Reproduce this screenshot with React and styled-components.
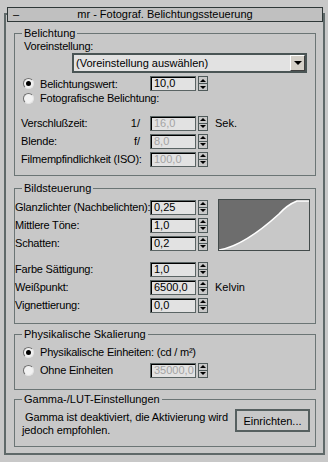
import React from 'react';
import styled, {createGlobalStyle} from 'styled-components';

const GlobalStyle = createGlobalStyle`
  html, body {
    margin: 0;
    padding: 0;
    background: #c8c8c8;
  }
  body {
    font-family: "Liberation Sans", Arial, sans-serif;
    font-size: 11px;
    color: #000;
  }
`

const Frame = styled.div`
  margin: 13px 3px 0 4px;
  border: 2px solid #5f6969;
  padding: 0 0 6px 0;
`

const TitleBar = styled.div`
  box-sizing: border-box;
  height: 15px;
  margin: -8px 0 0 1px;
  border: 1px solid #2f3838;
  background: #c0c0c0;
  display: flex;
  align-items: center;
  line-height: 13px;
`

const Collapse = styled.span`
  width: 14px;
  padding-left: 5px;
`

const TitleText = styled.span`
  flex: 1;
  text-align: center;
  margin-right: 19px;
`

const Group = styled.div`
  margin: ${({$top}) => $top}px 7px 0 8px;
  border: 1px solid #6b7575;
  padding-bottom: ${({$bottom}) => $bottom}px;
`

const GroupTitle = styled.div`
  display: table;
  margin: -8px 0 0 7px;
  padding: 0 2px;
  line-height: 14px;
  background: #c8c8c8;
`

const Caption = styled.div`
  height: 13px;
  line-height: 13px;
  padding-left: 9px;
  letter-spacing: -0.2px;
`

const Select = styled.div`
  box-sizing: border-box;
  height: 20px;
  margin: 0 8px 0 57px;
  border: 2px solid #4a5555;
  background: #e2e2e2;
  display: flex;
  align-items: center;
  padding-left: 2px;
`

const SelectText = styled.span`
  flex: 1;
`

const SelectArrow = styled.span`
  box-sizing: border-box;
  width: 15px;
  height: 16px;
  background: #d4d0c8;
  border: 1px solid;
  border-color: #ffffff #404040 #404040 #ffffff;
  display: flex;
  align-items: center;
  justify-content: center;
  &::after {
    content: '';
    border-left: 4px solid transparent;
    border-right: 4px solid transparent;
    border-top: 4px solid #000;
  }
`

const Row = styled.div`
  display: flex;
  align-items: center;
  height: ${({$h}) => $h || 18}px;
  margin-top: ${({$mt}) => $mt || 0}px;
  padding-left: ${({$pl}) => $pl || 0}px;
  white-space: nowrap;
`

const Label = styled.span`
  width: ${({$w}) => $w}px;
  flex: none;
  letter-spacing: -0.2px;
`

const Prefix = styled.span`
  width: 12px;
  margin-right: 10px;
  text-align: right;
  flex: none;
`

const Radio = styled.span`
  box-sizing: border-box;
  width: 11px;
  height: 11px;
  flex: none;
  margin-left: 8px;
  margin-right: 6px;
  border-radius: 50%;
  border: 1px solid #6e6e6e;
  border-right-color: #e4e4e4;
  border-bottom-color: #e4e4e4;
  background: #f2f2f2;
  display: flex;
  align-items: center;
  justify-content: center;
  &::after {
    content: '';
    width: 5px;
    height: 5px;
    border-radius: 50%;
    background: ${({$checked}) => $checked ? '#000' : 'transparent'};
  }
`

const RadioLabel = styled.span`
  width: ${({$w}) => $w ? `${$w}px` : 'auto'};
  flex: none;
  letter-spacing: -0.2px;
`

const Field = styled.span`
  box-sizing: border-box;
  width: 46px;
  height: 15px;
  flex: none;
  border: 1px solid #5a6464;
  box-shadow: inset 1px 1px 0 #000;
  background: #e2e2e2;
  color: ${({$disabled}) => $disabled ? '#a4a4a4' : '#000'};
  line-height: 13px;
  padding-left: 3px;
`

const Spinner = styled.span`
  box-sizing: border-box;
  width: 10px;
  height: 15px;
  margin-left: 2px;
  flex: none;
  display: flex;
  flex-direction: column;
`

const SpinButton = styled.span`
  box-sizing: border-box;
  flex: 1;
  border: 1px solid #4f5a5a;
  margin-top: ${({$down}) => $down ? '-1px' : '0'};
  display: flex;
  align-items: center;
  justify-content: center;
  &::after {
    content: '';
    border-left: 3px solid transparent;
    border-right: 3px solid transparent;
    ${({$down}) => $down ? 'border-top: 3px solid #000;' : 'border-bottom: 3px solid #000;'}
  }
`

const Unit = styled.span`
  margin-left: 7px;
`

const Split = styled.div`
  display: flex;
  margin-top: 3px;
`

const Column = styled.div`
  display: flex;
  flex-direction: column;
`

const Curve = styled.svg`
  box-sizing: border-box;
  width: 92px;
  height: 52px;
  margin: 1px 0 0 10px;
  border: 1px solid #434b4b;
`

const GammaBody = styled.div`
  display: flex;
  margin-top: 3px;
`

const GammaText = styled.div`
  flex: 1;
  padding-left: 7px;
  margin-top: 2px;
  line-height: 13px;
  letter-spacing: -0.1px;
`

const Button = styled.div`
  box-sizing: border-box;
  width: 75px;
  height: 23px;
  margin-right: 5px;
  border: 2px solid #566060;
  display: flex;
  align-items: center;
  justify-content: center;
`

const Spin = () => (
    <Spinner>
        <SpinButton/>
        <SpinButton $down/>
    </Spinner>
)

const Param = ({label, value, prefix, unit, disabled, indent, mt}) => (
    <Row $mt={mt} $pl={indent ? 6 : 0}>
        {indent
            ? <><Label $w={107}>{label}</Label><Prefix>{prefix}</Prefix></>
            : <Label $w={135}>{label}</Label>}
        <Field $disabled={disabled}>{value}</Field>
        <Spin/>
        {unit && <Unit>{unit}</Unit>}
    </Row>
)

const App = () => {
    return (
        <>
            <GlobalStyle/>
            <Frame>
                <TitleBar>
                    <Collapse>–</Collapse>
                    <TitleText>mr - Fotograf. Belichtungssteuerung</TitleText>
                </TitleBar>

                <Group $top={11} $bottom={7}>
                    <GroupTitle>Belichtung</GroupTitle>
                    <Caption>Voreinstellung:</Caption>
                    <Select>
                        <SelectText>(Voreinstellung auswählen)</SelectText>
                        <SelectArrow/>
                    </Select>
                    <Row $h={15} $mt={3}>
                        <Radio $checked/>
                        <RadioLabel $w={110}>Belichtungswert:</RadioLabel>
                        <Field>10,0</Field>
                        <Spin/>
                    </Row>
                    <Row $h={14}>
                        <Radio/>
                        <RadioLabel>Fotografische Belichtung:</RadioLabel>
                    </Row>
                    <Param indent mt={9} label="Verschlußzeit:" prefix="1/" value="16,0" unit="Sek." disabled/>
                    <Param indent label="Blende:" prefix="f/" value="8,0" disabled/>
                    <Param indent label="Filmempfindlichkeit (ISO):" value="100,0" disabled/>
                </Group>

                <Group $top={12} $bottom={9}>
                    <GroupTitle>Bildsteuerung</GroupTitle>
                    <Split>
                        <Column>
                            <Param label="Glanzlichter (Nachbelichten):" value="0,25"/>
                            <Param label="Mittlere Töne:" value="1,0"/>
                            <Param label="Schatten:" value="0,2"/>
                        </Column>
                        <Curve viewBox="0 0 90 50" preserveAspectRatio="none">
                            <path d="M0,0 L0,50 C18,47 38,34 60,14 Q68,5 78,1 L90,1 L90,0 Z" fill="#6d6d6d"/>
                            <path d="M0,50 C18,47 38,34 60,14 Q68,5 78,1 L90,1" fill="none" stroke="#ffffff" strokeWidth="1.6"/>
                        </Curve>
                    </Split>
                    <Param mt={8} label="Farbe Sättigung:" value="1,0"/>
                    <Param label="Weißpunkt:" value="6500,0" unit="Kelvin"/>
                    <Param label="Vignettierung:" value="0,0"/>
                </Group>

                <Group $top={10} $bottom={11}>
                    <GroupTitle>Physikalische Skalierung</GroupTitle>
                    <Row $h={14} $mt={4}>
                        <Radio $checked/>
                        <RadioLabel>Physikalische Einheiten: (cd / m²)</RadioLabel>
                    </Row>
                    <Row $h={16} $mt={3}>
                        <Radio/>
                        <RadioLabel $w={110}>Ohne Einheiten</RadioLabel>
                        <Field $disabled>35000,0</Field>
                        <Spin/>
                    </Row>
                </Group>

                <Group $top={9} $bottom={9}>
                    <GroupTitle>Gamma-/LUT-Einstellungen</GroupTitle>
                    <GammaBody>
                        <GammaText>
                            &nbsp;Gamma ist deaktiviert, die Aktivierung wird<br/>
                            jedoch empfohlen.
                        </GammaText>
                        <Button>Einrichten...</Button>
                    </GammaBody>
                </Group>
            </Frame>
        </>
    );
};

export default App;
